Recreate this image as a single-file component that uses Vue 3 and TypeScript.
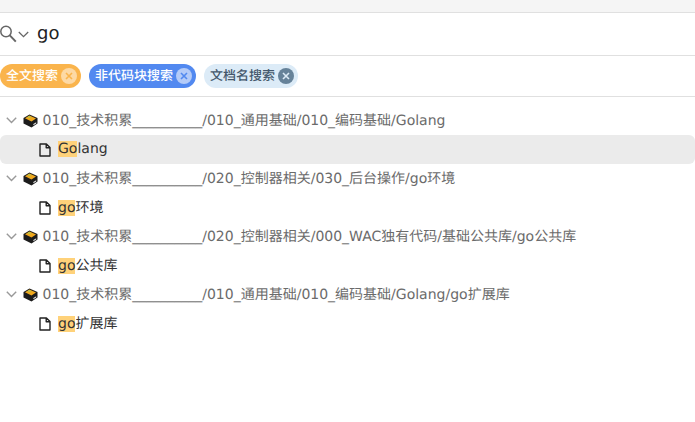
<template>
  <div class="search-panel">
    <div class="top-strip"></div>

    <!-- search input -->
    <div class="search-row">
      <svg class="search-icon" width="17" height="18" viewBox="0 0 17 18" fill="none">
        <circle cx="6" cy="6.5" r="5.2" stroke="#666" stroke-width="1.5" />
        <path d="M9.8 10.4 L15.8 16.6" stroke="#666" stroke-width="2" />
      </svg>
      <svg class="caret" width="11" height="7" viewBox="0 0 11 7" fill="none">
        <path d="M0.8 1 L5.5 5.6 L10.2 1" stroke="#666" stroke-width="1.3" />
      </svg>
      <span class="query">go</span>
    </div>

    <!-- filter tags -->
    <div class="tag-row">
      <span v-for="tag in tags" :key="tag.label" class="tag" :class="tag.kind">
        <span class="tag-label">{{ tag.label }}</span>
        <svg class="tag-close" width="16" height="16" viewBox="0 0 16 16">
          <circle cx="8" cy="8" r="8" class="tag-close-bg" />
          <path d="M5 5 L11 11 M11 5 L5 11" class="tag-close-x" />
        </svg>
      </span>
    </div>

    <!-- results -->
    <div class="results">
      <template v-for="(group, i) in groups" :key="i">
        <div class="row group-row">
          <svg class="chevron" width="11" height="7" viewBox="0 0 11 7" fill="none">
            <path d="M0.8 0.8 L5.5 5.5 L10.2 0.8" stroke="#999" stroke-width="1.4" />
          </svg>
          <svg class="box" width="15" height="14" viewBox="0 0 15 14">
            <path d="M6.5 0.5 L14.5 4 L14.5 9.5 L8.5 13.5 L0.5 9.5 L0.5 4 Z" fill="#1c1c1c" />
            <path d="M6.5 1.5 L13 4.6 L8.5 7.4 L2 4.2 Z" fill="#f2a91e" />
            <path d="M6 2 L8.6 3.2 L6.6 4.2 L4.4 3.2 Z" fill="#b5c24a" />
            <path d="M10.4 10 L13.2 8.2 L13.2 9.4 L10.4 11.2 Z" fill="#e8e8e8" />
          </svg>
          <span class="path">{{ group.path }}</span>
        </div>
        <div class="row file-row" :class="{ selected: i === 0 }">
          <svg class="file" width="12" height="14" viewBox="0 0 12 14" fill="none">
            <path d="M1 1 L7.4 1 L11 4.6 L11 13 L1 13 Z M7.2 1 L7.2 4.8 L11 4.8" stroke="#222" stroke-width="1.4" stroke-linejoin="round" />
          </svg>
          <span class="file-name"><mark>{{ group.hit }}</mark>{{ group.rest }}</span>
        </div>
      </template>
    </div>
  </div>
</template>

<script setup lang="ts">
const tags = [
  { label: '全文搜索', kind: 'orange' },
  { label: '非代码块搜索', kind: 'blue' },
  { label: '文档名搜索', kind: 'pale' },
];

const groups = [
  { path: '010_技术积累__________/010_通用基础/010_编码基础/Golang', hit: 'Go', rest: 'lang' },
  { path: '010_技术积累__________/020_控制器相关/030_后台操作/go环境', hit: 'go', rest: '环境' },
  { path: '010_技术积累__________/020_控制器相关/000_WAC独有代码/基础公共库/go公共库', hit: 'go', rest: '公共库' },
  { path: '010_技术积累__________/010_通用基础/010_编码基础/Golang/go扩展库', hit: 'go', rest: '扩展库' },
];
</script>

<style scoped>
.search-panel {
  width: 695px;
  height: 422px;
  background: #fff;
  overflow: hidden;
  font-family: "DejaVu Sans", "Noto Sans CJK SC", sans-serif;
  text-rendering: geometricPrecision;
}

.top-strip {
  height: 12px;
  background: #f5f5f5;
  border-bottom: 1px solid #e0e0e0;
}

.search-row {
  display: flex;
  align-items: center;
  height: 42px;
  border-bottom: 1px solid #e0e0e0;
}

.caret {
  margin-left: 1px;
}

.query {
  margin-left: 8px;
  margin-bottom: 1px;
  font-size: 18px;
  color: #222;
}

.tag-row {
  display: flex;
  align-items: center;
  gap: 8px;
  height: 40px;
  border-bottom: 1px solid #e0e0e0;
}

.tag {
  display: flex;
  align-items: center;
  gap: 3px;
  height: 24px;
  padding: 0 4px 0 6px;
  border-radius: 12px;
  font-size: 13px;
}

.tag-label {
  margin-bottom: 3px;
  font-weight: 500;
}

.tag-close-x {
  fill: none;
  stroke-width: 1.6;
}

.orange {
  background: #fab44c;
  color: #fff;
}

.orange .tag-close-bg {
  fill: #fdd9a5;
}

.orange .tag-close-x {
  stroke: #fab44c;
}

.blue {
  background: #5289f0;
  color: #fff;
}

.blue .tag-close-bg {
  fill: #b4cbf8;
}

.blue .tag-close-x {
  stroke: #5289f0;
}

.pale {
  background: #dcebf7;
  color: #44586c;
}

.pale .tag-close-bg {
  fill: #668299;
}

.pale .tag-close-x {
  stroke: #dcebf7;
}

.results {
  padding-top: 9px;
}

.row {
  display: flex;
  align-items: center;
  height: 29px;
  white-space: nowrap;
  font-size: 14px;
}

.chevron {
  margin-left: 6px;
}

.box {
  margin-left: 6px;
}

.path {
  margin-left: 4.5px;
  margin-bottom: 2px;
  color: #6b6b6b;
}

.file-row {
  padding-left: 39px;
  color: #333;
  border-radius: 6px;
}

.selected {
  background: #ebebeb;
}

.file-name {
  margin-left: 7px;
  margin-bottom: 1px;
}

mark {
  background: #ffd27a;
  color: inherit;
}
</style>

<style>
html, body {
  margin: 0;
  background: #fff;
}
</style>
